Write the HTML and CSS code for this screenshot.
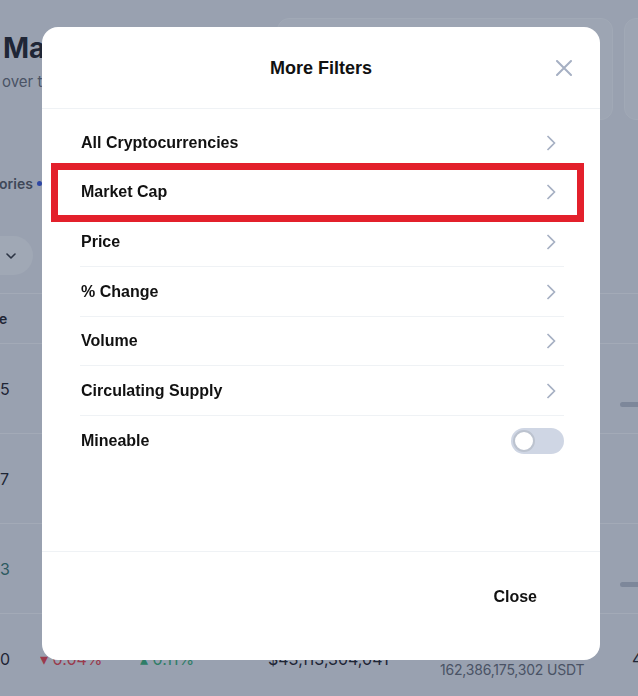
FILE: index.html
```html
<!DOCTYPE html>
<html lang="en">
<head>
  <meta charset="UTF-8" />
  <meta name="viewport" content="width=device-width, initial-scale=1.0"/>
  <title>More Filters</title>
  <link rel="stylesheet" href="styles.css">
</head>
<body>
  <!-- page behind the dialog -->
  <div class="page">
    <div class="hero">
      <div class="hero-text">
        <h1>Market Overview</h1>
        <p>over the last 24 hours</p>
      </div>
      <div class="hero-cards">
        <div class="stat-card"></div>
        <div class="stat-card"></div>
      </div>
    </div>

    <div class="tabs">
      <span>ories</span>
      <span class="dot"></span>
    </div>

    <div class="toolbar">
      <button class="pill">
        <svg width="12" height="8" viewBox="0 0 12 8"><path d="M2 2 L6 6 L10 2" fill="none" stroke="#2c3444" stroke-width="1.6" stroke-linecap="round" stroke-linejoin="round"/></svg>
      </button>
    </div>

    <div class="table">
      <div class="row head">
        <div>e</div><div></div><div></div><div></div><div></div><div></div>
      </div>
      <div class="row">
        <div>5</div><div></div><div></div><div></div><div></div><div class="bar-cell"><span class="bar"></span></div>
      </div>
      <div class="row">
        <div>7</div><div></div><div></div><div></div><div></div><div></div>
      </div>
      <div class="row">
        <div class="teal">3</div><div></div><div></div><div></div><div></div><div class="bar-cell"><span class="bar"></span></div>
      </div>
      <div class="row">
        <div>0</div><div class="down">&#9662; 0.04%</div><div class="up">&#9652; 0.11%</div><div>$43,113,304,041</div><div class="stack"><span>$162,355,890</span><span class="sub">162,386,175,302 USDT</span></div><div class="last">46 BNB</div>
      </div>
    </div>
  </div>

  <!-- dialog -->
  <div class="modal">
    <div class="modal-head">
      <span></span>
      <h2>More Filters</h2>
      <button class="icon-close" aria-label="Close">
        <svg width="16" height="16" viewBox="0 0 16 16"><path d="M1 1 L15 15 M15 1 L1 15" stroke="#a6b0c3" stroke-width="2" stroke-linecap="round"/></svg>
      </button>
    </div>

    <div class="modal-body">
      <ul class="filter-list">
        <li class="filter-item"><span>All Cryptocurrencies</span><svg class="chev" width="10" height="16" viewBox="0 0 10 16"><path d="M1.5 1 L8.5 8 L1.5 15" fill="none" stroke="#a6b0c3" stroke-width="1.6"/></svg></li>
        <li class="filter-item"><span>Market Cap</span><svg class="chev" width="10" height="16" viewBox="0 0 10 16"><path d="M1.5 1 L8.5 8 L1.5 15" fill="none" stroke="#a6b0c3" stroke-width="1.6"/></svg></li>
        <li class="filter-item"><span>Price</span><svg class="chev" width="10" height="16" viewBox="0 0 10 16"><path d="M1.5 1 L8.5 8 L1.5 15" fill="none" stroke="#a6b0c3" stroke-width="1.6"/></svg></li>
        <li class="filter-item"><span>% Change</span><svg class="chev" width="10" height="16" viewBox="0 0 10 16"><path d="M1.5 1 L8.5 8 L1.5 15" fill="none" stroke="#a6b0c3" stroke-width="1.6"/></svg></li>
        <li class="filter-item"><span>Volume</span><svg class="chev" width="10" height="16" viewBox="0 0 10 16"><path d="M1.5 1 L8.5 8 L1.5 15" fill="none" stroke="#a6b0c3" stroke-width="1.6"/></svg></li>
        <li class="filter-item"><span>Circulating Supply</span><svg class="chev" width="10" height="16" viewBox="0 0 10 16"><path d="M1.5 1 L8.5 8 L1.5 15" fill="none" stroke="#a6b0c3" stroke-width="1.6"/></svg></li>
        <li class="filter-item"><span>Mineable</span><span class="switch"><span class="knob"></span></span></li>
      </ul>
    </div>

    <div class="modal-foot">
      <button class="btn-close">Close</button>
    </div>

    <!-- annotation box -->
    <div class="highlight"></div>
  </div>
</body>
</html>
```

FILE: styles.css
```css
* {
  box-sizing: border-box;
}
body {
  margin: 0;
  width: 638px;
  height: 696px;
  overflow: hidden;
  background-color: #99a1b0;
  font-family: Inter, "Liberation Sans", sans-serif;
  color: #1f2636;
}

/* page behind the dialog (already dimmed colours) */
.page {
  white-space: nowrap;
}
.hero {
  display: flex;
  height: 150px;
}
.hero-text {
  width: 277px;
  flex-shrink: 0;
  padding: 32px 0 0 3px;
}
.hero-text h1 {
  margin: 0;
  font-size: 28px;
  line-height: 32px;
  font-weight: 700;
  color: #1f2636;
}
.hero-text p {
  margin: 8px 0 0 -1px;
  font-size: 15px;
  line-height: 20px;
  color: #4a5365;
}
.hero-cards {
  display: flex;
  gap: 11px;
  padding-top: 18px;
}
.stat-card {
  width: 336px;
  height: 102px;
  flex-shrink: 0;
  border-radius: 12px;
  background-color: #9da5b3;
  border: 1px solid #a1a9b6;
}
.tabs {
  display: flex;
  align-items: center;
  gap: 4px;
  height: 66px;
  font-size: 14px;
  font-weight: 600;
  color: #3f4858;
}
.tabs span:first-child {
  margin-left: -1px;
}
.dot {
  width: 5px;
  height: 5px;
  border-radius: 50%;
  background-color: #2e47a4;
}
.toolbar {
  padding: 20px 0 18px;
}
.pill {
  display: flex;
  align-items: center;
  justify-content: flex-end;
  width: 33px;
  height: 39px;
  padding: 0 16px 0 0;
  border: none;
  border-radius: 0 20px 20px 0;
  background-color: #a0a8b5;
}
.table {
  font-size: 16px;
}
.row {
  display: grid;
  grid-template-columns: 40px 100px 128px 172px 180px 200px;
  align-items: center;
  height: 90px;
  border-bottom: 1px solid #a3aab7;
}
.row > div {
  overflow: hidden;
}
.row.head {
  height: 51px;
  border-top: 1px solid #a3aab7;
  font-size: 14px;
  font-weight: 600;
}
.row.head div:first-child {
  margin-left: -1px;
}
.down {
  color: #9a3a4c;
}
.up {
  color: #2f7d67;
}
.teal {
  color: #2d5a60;
}
.stack {
  display: flex;
  flex-direction: column;
  line-height: 22px;
}
.stack .sub {
  font-size: 14px;
  color: #4a5365;
  letter-spacing: -0.2px;
}
.bar-cell {
  align-self: end;
  padding-bottom: 26px;
}
.bar {
  display: block;
  width: 60px;
  height: 5px;
  border-radius: 3px;
  background-color: #7d879a;
}
.last {
  padding-left: 12px;
}

/* dialog */
.modal {
  position: fixed;
  left: 42px;
  top: 27px;
  width: 558px;
  height: 633px;
  display: flex;
  flex-direction: column;
  background-color: #fff;
  border-radius: 16px;
  font-family: "Liberation Sans", Arial, sans-serif;
  color: #0d1421;
}
.modal-head {
  display: grid;
  grid-template-columns: 1fr auto 1fr;
  align-items: center;
  height: 82px;
  padding-top: 1px;
  border-bottom: 1px solid #eff2f5;
}
.modal-head h2 {
  margin: 0;
  font-size: 18px;
  font-weight: 700;
  color: #111;
}
.icon-close {
  justify-self: end;
  display: flex;
  margin-right: 28px;
  padding: 0;
  border: none;
  background: none;
}
.modal-body {
  flex: 1;
  padding: 9.5px 36px 0 38px;
}
.filter-list {
  list-style: none;
  margin: 0;
  padding: 0;
}
.filter-item {
  display: flex;
  align-items: center;
  justify-content: space-between;
  height: 49.6px;
  padding-left: 1px;
  border-bottom: 1px solid #eff2f5;
  font-size: 16px;
  font-weight: 700;
  color: #111;
}
.filter-item:last-child {
  border-bottom: none;
}
.chev {
  margin-right: 8px;
}
.switch {
  display: flex;
  align-items: center;
  width: 53px;
  height: 26px;
  padding: 0 2px;
  border-radius: 13px;
  background-color: #cfd6e4;
}
.knob {
  width: 22px;
  height: 22px;
  border-radius: 50%;
  background-color: #fff;
  border: 2px solid #bcc3cf;
}
.modal-foot {
  display: flex;
  justify-content: flex-end;
  height: 109px;
  padding: 21px 39px 0 0;
  border-top: 1px solid #eff2f5;
}
.btn-close {
  height: 48px;
  padding: 0 24px;
  border: none;
  background: none;
  font-family: "Liberation Sans", Arial, sans-serif;
  font-size: 16px;
  font-weight: 700;
  color: #111;
}
.highlight {
  position: absolute;
  left: 9px;
  top: 136px;
  width: 533px;
  height: 59px;
  border: 7px solid #e3202b;
  pointer-events: none;
}
```
